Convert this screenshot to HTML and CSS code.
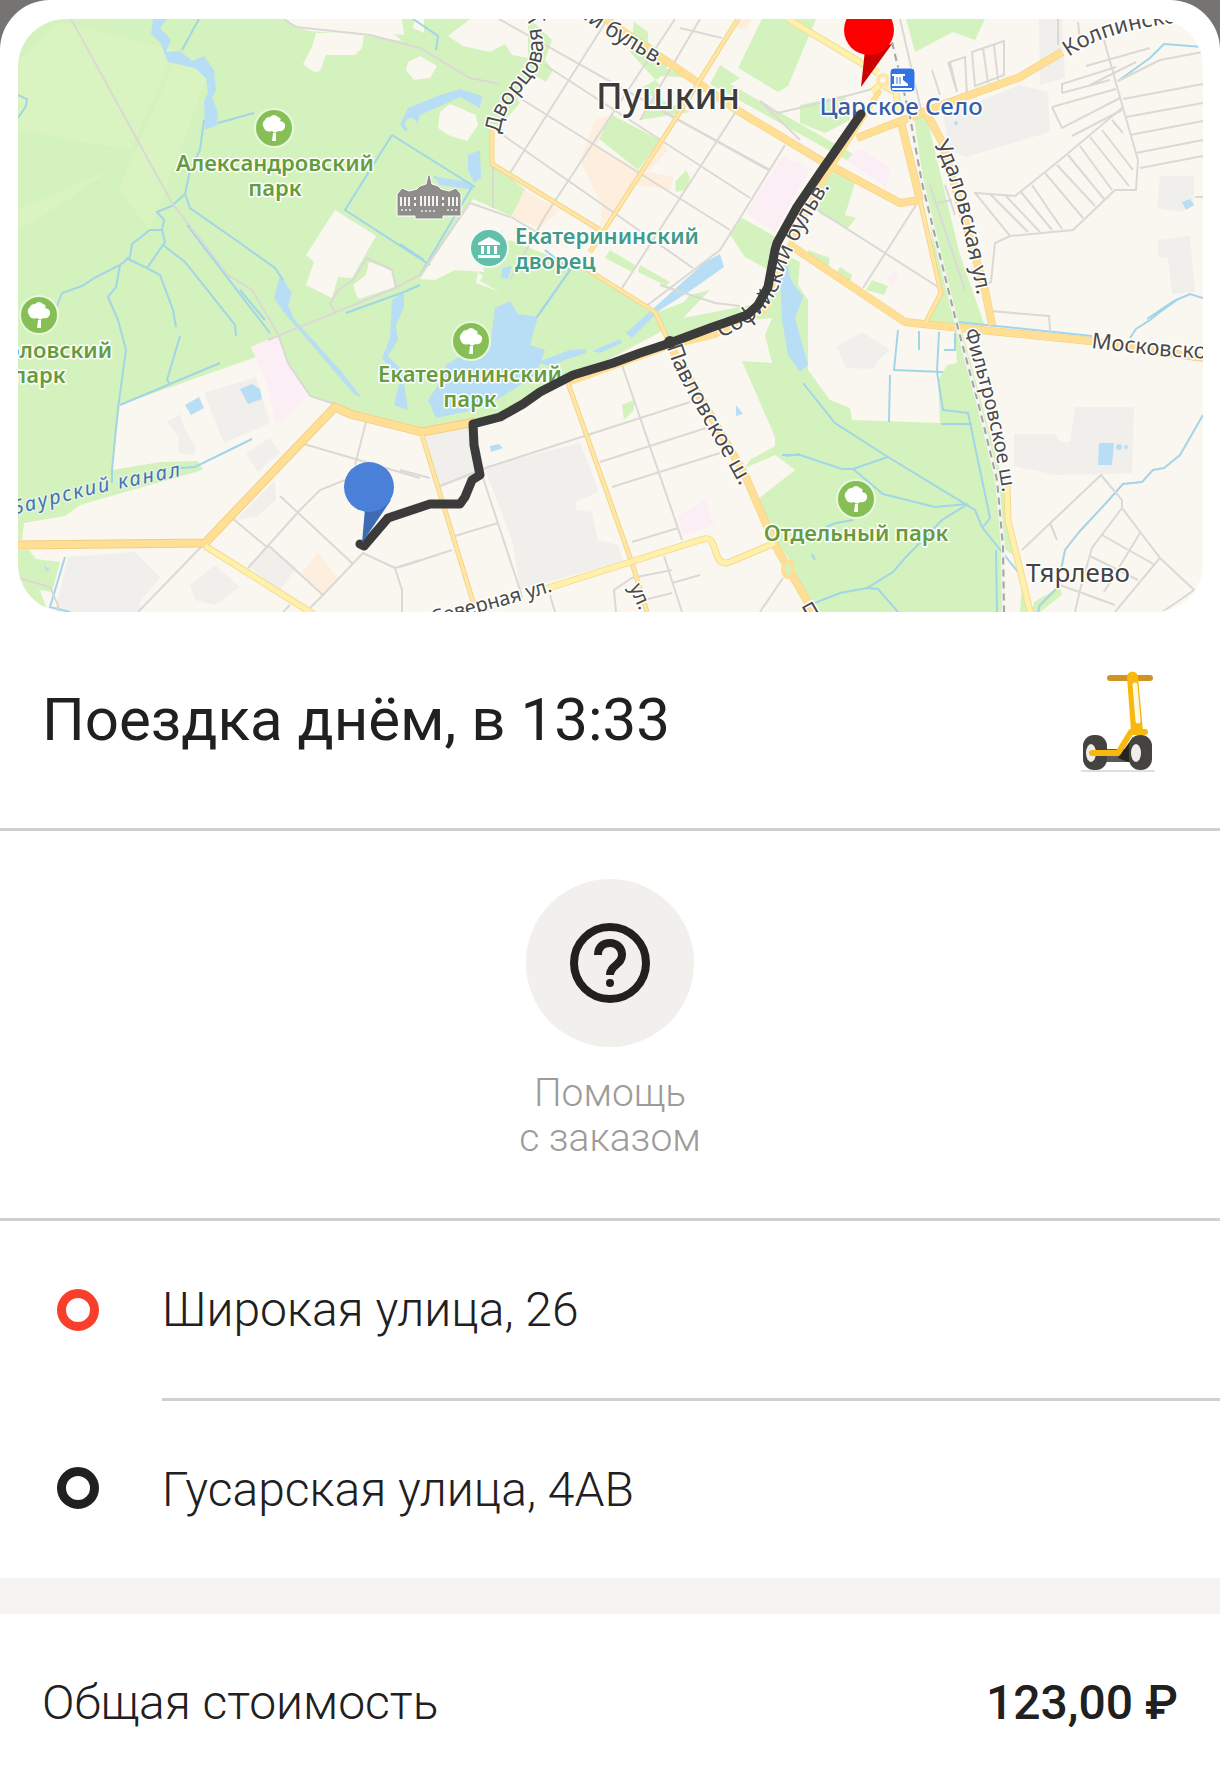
FILE: index.html
```html
<!DOCTYPE html>
<html lang="ru">
<head>
    <meta charset="UTF-8">
    <meta name="viewport" content="width=device-width, initial-scale=1.0">
    <title>Поездка</title>
    <link rel="stylesheet" href="styles.css">
</head>
<body>

<main class="sheet">

    <div class="map">
        <svg viewBox="18 19 1185 593" role="img" aria-label="Маршрут поездки">
            <defs>
                <g id="tree">
                    <circle r="20" fill="#e9f8dc"/>
                    <circle r="18" fill="#86bf56"/>
                    <path d="M-9-8Q-8-11-4-11Q0-15 4-11Q8-10 6-7Q12-6 11-1Q10 4 4 3Q1 6-2 3Q-8 5-10 0Q-13-5-9-8Z" fill="#fff"/>
                    <path d="M-1 5h3v8h-4z" fill="#fff"/>
                </g>
                <path id="p-dvor" d="M500 134C502 108 522 92 536 72C546 55 544 40 537 5"/>
                <path id="p-bulv" d="M576 14L605 34L670 72"/>
                <path id="p-sof" d="M721 338C750 325 771 310 781 281C789 251 810 218 837 175"/>
                <path id="p-pav" d="M667 347C675 377 705 420 745 495"/>
                <path id="p-udal" d="M934 145C955 181 966 240 980 310"/>
                <path id="p-filt" d="M964 331C978 375 993 430 1003 495"/>
                <path id="p-kolp" d="M1069 57C1095 38 1130 27 1200 20"/>
                <path id="p-mosk" d="M1091 348L1160 356L1230 360"/>
                <path id="p-kanal" d="M14 515L90 495L190 474"/>
                <path id="p-sev" d="M433 625C470 614 510 605 560 589"/>
            </defs>

            <rect x="18" y="19" width="1185" height="593" fill="#faf7f0"/>

            <!-- парки -->
            <g fill="#d4f2bd">
                <path d="M18 19H530L552 40L545 60L553 70L546 82L534 75L516 97L520 103L505 120L492 132V164L526 190L511 217L505 218L500 243L480 254L485 262L510 240L590 272L655 313L690 300L683 320L560 385L540 395L500 417L474 425L424 432L350 414L335 404L310 396L288 362L278 335L251 347L256 357L120 405L112 470L160 462L198 461L203 470L150 485L80 505L65 516L24 523L22 540H18Z"/>
                <path d="M18 550H29L36 559L60 562L52 592L40 590L48 612H18Z"/>
                <path d="M598 138L612 115L660 140L638 170Z"/>
                <path d="M634 22L648 32L648 42L672 62L666 68L694 78L662 76L638 90L690 112L640 120L660 85L630 52Z"/>
                <path d="M762 19H816L788 86L778 92L738 68Z"/>
                <path d="M720 65L740 78L730 84L860 158L850 162L710 84Z"/>
                <path d="M906 19H985L975 40L953 32L915 52Z"/>
                <path d="M800 105L845 95L850 120L825 133L800 123Z"/>
                <path d="M675 182L686 170L690 178L686 190L676 192Z"/>
                <path d="M742 218L776 237L772 272L745 257L729 233Z"/>
                <path d="M828 165L856 180L845 215L856 218L848 228L820 214L816 200Z"/>
                <path d="M610 250L635 265L632 272L605 258ZM640 265L670 282L666 286L638 272Z"/>
                <path d="M808 250L830 258L828 268L808 262ZM840 267L852 275L850 282L835 275ZM872 280L888 286L884 295L866 290Z"/>
                <path d="M622 405L634 400L634 410L624 420Z"/>
                <path d="M659 325L670 318L690 295L710 290L683 318L765 302L770 288L785 255L800 262L798 285L808 300L808 370L830 400L850 408L852 420L940 423L938 380L947 365L957 363L955 330L925 325L940 293L914 118H927L960 255L985 326L962 330L1003 482L1010 542L1032 612H812L790 560L775 540L757 500L795 470L775 455L745 468L750 460L775 446V437L742 361L772 363L765 335L772 318L735 322L668 343Z"/>
                <path d="M1034 602L1060 587L1062 595L1040 612H1032Z"/>
            </g>
            <path d="M1003 548L1014 556L1022 585L1020 612H1004Z" fill="#faf7f0"/>
            <g fill="#e0f5c5" opacity="0.5">
                <path d="M60 22L175 50L130 150L18 130V60Z"/>
                <path d="M178 55L210 70L150 230L118 190Z"/>
                <path d="M18 210L110 170L60 205L18 230Z"/>
            </g>

            <!-- просветы в зелени -->
            <g fill="#faf7f0">
                <path d="M284 19H402L404 35L394 34L402 41L360 35L310 31L296 27Z"/>
                <path d="M316 33H364L362 48L355 55L326 55L320 71L314 72L303 64L312 47Z"/>
                <path d="M470 19H528V58L512 55L505 44L490 52L463 46L448 36Z"/>
                <path d="M408 62L420 56L437 66L430 78L414 80L406 70Z"/>
                <path d="M440 112L450 104L476 115L478 125L467 141L448 135L438 128Z"/>
                <path d="M415 19H424V33L413 28Z"/>
                <path d="M335 210L376 236L352 278L338 277L332 298L306 285L314 262L306 255Z"/>
                <path d="M369 262L393 270L395 287L358 299L353 285L366 275Z"/>
                <path d="M473 199L511 216L505 223L498 240L480 252L484 272L455 270L435 280L420 279L470 204Z"/>
                <path d="M478 272L483 276L480 281L500 292L476 283Z"/>
            </g>

            <!-- кварталы -->
            <g fill="#f0efeb">
                <path d="M204 393L256 377L270 423L224 443Z"/>
                <path d="M167 422L180 414L184 428L196 447L194 455L179 453L178 436Z"/>
                <path d="M246 453L270 438L280 452L258 472Z"/>
                <path d="M236 520L275 480L276 500L258 516Z"/>
                <path d="M68 557L135 552L160 577L140 602V612H55Z"/>
                <path d="M190 585L215 565L240 587L215 605L195 600Z"/>
                <path d="M250 568L266 545L297 567L280 590Z"/>
                <path d="M426 436L470 425L478 475L439 486Z"/>
                <path d="M484 467L580 443L594 478L598 492L575 502L576 510L592 512L598 540L618 545L623 561L520 590L512 540Z"/>
                <path d="M943 115L1020 85L1048 92L1050 132L965 157L950 150Z"/>
                <path d="M1039 19H1062L1065 78L1040 85Z"/>
                <path d="M1160 176H1194V205L1180 212L1157 208Z"/>
                <path d="M1158 240L1190 236L1195 292L1172 294L1168 258L1158 257Z"/>
                <path d="M837 347L862 332L890 350L878 360L874 369L846 368Z"/>
                <path d="M1075 407H1134L1132 473L1056 475L1014 466V434H1056L1060 442H1070Z"/>
            </g>
            <g fill="#fceef5">
                <path d="M251 347L278 337L288 363L307 397L290 415L276 424L268 387Z"/>
                <path d="M745 213L783 156L809 168L775 232Z"/>
                <path d="M678 516L705 500L714 525L683 536Z"/>
                <path d="M847 160L858 148L890 167L886 188Z"/>
                <path d="M800 165L808 172L800 190Z"/>
                <path d="M886 277L894 271L900 277L892 287Z"/>
            </g>
            <g fill="#fdeedd">
                <path d="M302 573L318 553L339 580L323 593Z"/>
                <path d="M524 190L560 210L540 228L512 217Z"/>
                <path d="M595 120L610 115L597 145L638 170L674 177L670 190L632 184L610 215L600 228L602 205L580 160Z"/>
                <path d="M660 140L668 150L650 170L640 168Z"/>
                <path d="M738 19H752L746 30L736 28Z"/>
            </g>

            <!-- вода -->
            <g fill="#b7def5">
                <path d="M153 19H167L160 28L171 40L166 52L180 51L192 61L204 56L214 70L216 90L212 98L218 112L217 125L205 130L204 102L208 92L206 78L195 68L168 62L160 42L151 34Z"/>
                <path d="M280 275L292 293L288 305L294 319L340 370L362 398L354 394L286 315L274 298Z"/>
                <path d="M400 125L408 108L440 95L460 89L482 96L480 108L460 97L445 104L420 115L416 128L405 131Z"/>
                <path d="M468 155L480 150L481 178L474 183L468 170Z"/>
                <path d="M432 175L442 178L470 182L474 190L440 185Z"/>
                <path d="M495 308L510 301L518 314L538 317L530 345L545 350L536 375L500 398L465 412L436 418L428 400L438 385L446 365L470 350L490 348Z"/>
                <path d="M392 300L404 292V307L396 325L398 340L388 356L402 370L408 410L394 405L400 380L382 358L390 338Z"/>
                <path d="M538 362L570 350L586 349L586 353L565 360L548 366ZM592 351L620 339L622 343L600 353Z"/>
                <path d="M626 333L705 262L720 254L724 267L690 291L660 310L632 338Z"/>
                <path d="M502 268L512 266L508 279L501 278Z"/>
                <path d="M780 275L786 255L791 280L803 297L795 318L808 365L800 372L788 355L782 320Z"/>
                <path d="M185 405L199 397L204 408L191 415Z"/>
                <path d="M240 389L252 384L260 389L262 399L248 404Z"/>
                <path d="M490 446L499 444L503 448L491 452Z"/>
                <path d="M736 405L743 414L736 416Z"/>
                <path d="M1099 443H1114L1112 465H1098Z"/>
                <path d="M1182 202L1190 199L1194 205L1186 210Z"/>
                <circle cx="956" cy="123" r="2"/><circle cx="1119" cy="447" r="3"/><circle cx="1126" cy="447" r="2"/>
                <path d="M44 565L50 570L46 572Z"/>
            </g>
            <path d="M455 315L480 322L478 345L462 355L455 340Z" fill="#d4f2bd"/>
            <circle cx="411" cy="124" r="6" fill="#d4f2bd"/>
            <g fill="none" stroke="#a3d5e8" stroke-width="2">
                <path d="M199 19L182 50M218 123L254 113M18 95L27 99L26 106L18 118"/>
                <path d="M204 120L200 150L190 170L185 194L172 206L157 212L164 220L162 230H150L132 244L130 257L120 265L96 277L82 286L62 293L57 306M18 360L38 345"/>
                <path d="M185 194L190 208L240 243L275 268L283 280"/>
                <path d="M162 230L165 242L147 268L126 258M147 268L160 275L173 310L176 327M163 245L185 262L235 325L236 336"/>
                <path d="M120 265L116 287L108 297L118 320L126 350L118 408L112 470V483"/>
                <path d="M187 225L270 333M240 290L265 320"/>
                <path d="M180 336L167 380L170 384M120 405L220 363"/>
                <path d="M413 19L438 36L436 50M392 135L345 210L430 265M392 135L475 187M400 244L424 260M420 275L472 187M538 316L570 270"/>
                <path d="M180 468L195 467L252 439M65 557L50 607L70 612"/>
                <path d="M346 313L404 292L420 285M545 250L570 270L536 318"/>
                <path d="M803 383L835 423L888 457L975 510L982 527L1018 572M782 455L800 455L842 469L853 469L888 457M853 469L883 494L935 507L968 504L942 520L905 558L893 572L867 588L840 593L812 604M867 588L878 589L898 612"/>
                <path d="M898 330L894 370L943 372M890 375L889 422M919 331V350M939 332L937 372L943 410L968 413L990 518L983 527M941 424H972M944 350H955V333M996 550L997 612"/>
                <path d="M1177 300L1160 312L1150 320L1136 329L1130 338M1203 298L1190 294L1174 301L1147 319"/>
                <path d="M1203 415L1180 455L1164 468L1153 470L1142 482L1123 484L1107 502L1080 531L1065 550L1061 570M1060 585L1040 605L1038 612"/>
                <path d="M1118 81L1150 58L1164 44L1203 47M958 322L1092 336"/>
                <path d="M786 456L800 454M826 527L836 523L853 520M812 554L815 560"/>
            </g>

            <!-- мелкие улицы -->
            <g fill="none" stroke="#dbd9d5" stroke-width="2">
                <path d="M71 19L172 203L228 275L252 290L278 334M284 19L296 27L370 35L420 48L470 78L500 84"/>
                <path d="M268 340L395 288L420 275L470 203L510 217"/>
                <path d="M335 312L330 304L338 290L353 280L367 258L392 270L396 288"/>
                <path d="M278 334L288 363L310 396L335 404"/>
                <path d="M499 19L768 170M545 65L750 198M515 95L730 230M500 133L693 268M605 23L510 173M675 19L545 216M735 113L622 288M785 145L740 218L720 250L645 307M493 164V208M511 217L550 240M700 19L640 120M680 28L722 38"/>
                <path d="M545 216L510 280M660 110L770 170M660 285L715 303L740 306"/>
                <path d="M760 101L778 113L820 103L880 87M760 101L800 140"/>
                <path d="M813 207L938 287M916 205L863 288M900 19L923 118"/>
                <path d="M948 62L957 92L950 62L965 57L967 95M972 52L1004 41V75L975 86ZM983 48L988 83M994 45L998 80"/>
                <path d="M932 70L940 95M1058 19V45M1078 22L1080 40M1104 40L1123 108L1138 160L1136 190L1115 190L1073 230L1010 236L975 193L1015 196L1060 160L1122 108"/>
                <path d="M1086 66L1150 48M1090 85L1136 62M1062 93L1110 80M1062 93V84L1116 67M1052 107L1116 89M1052 107L1062 128L1120 98M1072 136L1122 110"/>
                <path d="M1118 81L1160 60L1203 52M1123 99L1203 84M1126 117L1203 103M1130 135L1203 121M1136 153L1203 140M1140 168L1203 156"/>
                <path d="M990 194L1028 232M1006 196L1040 232M1021 192L1052 230M1032 185L1062 229M1045 173L1083 218M1057 165L1095 206M1068 155L1104 199M1080 146L1112 190M1090 137L1129 186M1102 130L1133 170M1112 120L1123 133"/>
                <path d="M1010 236L995 243L991 282L985 285M990 311L1049 316L1050 330"/>
                <path d="M930 185L965 290M945 185L955 215M938 203L952 200"/>
                <path d="M304 444L420 478M366 422L355 465M280 496L352 563M232 518L268 548M268 545L323 595L363 553L395 568L402 590V612M323 595L310 608M248 568L300 510L320 490L345 480M202 546L138 612M395 568L420 560M290 605L283 612"/>
                <path d="M400 470L430 478M438 487L485 468L690 402M600 462L706 428M612 487L720 453M622 365L682 540M482 475L520 590L522 598M455 536L498 523M400 567L452 550M632 542L678 528M550 595L555 612M616 612L614 590L632 578L672 570M664 556L682 612M672 583L700 575M640 601L672 593M783 578L760 612"/>
                <path d="M1022 550L1101 475L1122 500L1122 508L1092 548L1080 590M1050 523L1057 540M1122 508L1160 558L1115 612M1160 558L1194 590L1180 600L1162 612M1102 535L1155 565M1140 533L1104 592M1090 556L1138 580M1060 585L1115 605M1080 590L1075 612"/>
                <path d="M18 578L50 587L58 605V612M1195 197H1203"/>
            </g>

            <!-- дороги -->
            <g fill="none" stroke-linejoin="round">
                <g stroke="#f5cd7c">
                    <path d="M18 545L205 543L335 407L350 414L422 432L475 422" stroke-width="9"/>
                    <path d="M605 19L665 60L740 112L820 160L900 203L920 200" stroke-width="8"/>
                    <path d="M1062 52L1020 77L950 102L857 138M900 118L920 200M925 110L942 142L985 290L992 325" stroke-width="8"/>
                    <path d="M790 245L905 322L960 328L1090 341L1203 358" stroke-width="8"/>
                    <path d="M667 340L745 475L775 545L815 615" stroke-width="8"/>
                </g>
                <g stroke="#ffdf96">
                    <path d="M18 545L205 543L335 407L350 414L422 432L475 422" stroke-width="7"/>
                    <path d="M605 19L665 60L740 112L820 160L900 203L920 200" stroke-width="7"/>
                    <path d="M1062 52L1020 77L950 102L857 138M900 118L920 200M925 110L942 142L985 290L992 325" stroke-width="7"/>
                    <path d="M790 245L905 322L960 328L1090 341L1203 358" stroke-width="7"/>
                    <path d="M667 340L745 475L775 545L815 615" stroke-width="7"/>
                    <path d="M880 90L855 130L820 185L790 245L765 310L715 335L670 346L568 383" stroke-width="6"/>
                </g>
                <g stroke="#f5d585" stroke-width="5">
                    <path d="M492 130V164L600 230M738 19L700 80L675 120L590 252M585 268L655 312L668 340"/>
                    <path d="M920 200L941 293L926 322M568 383L632 563L647 612M422 435L474 605"/>
                </g>
                <g stroke="#ffe6a8" stroke-width="3">
                    <path d="M492 130V164L600 230M738 19L700 80L675 120L590 252M585 268L655 312L668 340"/>
                    <path d="M920 200L941 293L926 322M568 383L632 563L647 612M422 435L474 605"/>
                </g>
                <g stroke="#f3dc90" stroke-width="7">
                    <path d="M205 546L315 615M545 589L700 540Q710 536 713 544L718 558Q722 565 730 562L775 543M788 19L878 73"/>
                    <path d="M1007 485L1008 520L1031 615"/>
                    <path d="M872 92L880 85M884 86L896 92L898 110"/>
                </g>
                <g stroke="#fff0ac" stroke-width="5">
                    <path d="M205 546L315 615M545 589L700 540Q710 536 713 544L718 558Q722 565 730 562L775 543M788 19L878 73"/>
                    <path d="M1007 485L1008 520L1031 615"/>
                    <path d="M872 92L880 85M884 86L896 92L898 110"/>
                </g>
                <ellipse cx="788" cy="569" rx="5" ry="8" fill="#d4f2bd" stroke="#ffdf96" stroke-width="4"/>
                <circle cx="883" cy="80" r="5" fill="#faf7f0" stroke="#ffe6a8" stroke-width="4"/>
                <path d="M886 19L892 42L910 117L922 183L955 317L980 410L997 480L1003 547L1004 612" stroke="#f4f4f2" stroke-width="4"/>
                <path d="M886 19L892 42L910 117L922 183L955 317L980 410L997 480L1003 547L1004 612" stroke="#a3a3a0" stroke-width="2" stroke-dasharray="7 5"/>
            </g>

            <!-- названия улиц -->
            <g class="street">
                <text><textPath href="#p-dvor">Дворцовая ул.</textPath></text>
                <text><textPath href="#p-bulv">ий бульв.</textPath></text>
                <text><textPath href="#p-sof">Софийский бульв.</textPath></text>
                <text><textPath href="#p-pav">Павловское ш.</textPath></text>
                <text><textPath href="#p-udal">Удаловская ул.</textPath></text>
                <text class="small"><textPath href="#p-filt">Фильтровское ш.</textPath></text>
                <text><textPath href="#p-kolp">Колпинское</textPath></text>
                <text><textPath href="#p-mosk">Московское</textPath></text>
                <text class="small"><textPath href="#p-sev">Северная ул.</textPath></text>
                <text class="small" transform="translate(629 587) rotate(66)">ул.</text>
                <text transform="translate(808 622) rotate(-30)">П</text>
                <text class="canal"><textPath href="#p-kanal">Баурский канал</textPath></text>
            </g>

            <!-- подписи мест -->
            <g class="park">
                <text x="275" y="171">Александровский</text>
                <text x="275" y="196">парк</text>
                <text x="470" y="382">Екатерининский</text>
                <text x="470" y="407">парк</text>
                <text x="856" y="541">Отдельный парк</text>
                <text x="39" y="358">Баболовский</text>
                <text x="39" y="383">парк</text>
            </g>
            <g class="palace">
                <text x="515" y="244">Екатерининский</text>
                <text x="515" y="269">дворец</text>
            </g>
            <text class="station" x="901" y="115">Царское Село</text>
            <text class="city" x="668" y="109">Пушкин</text>
            <text class="village" x="1078" y="582">Тярлево</text>

            <!-- маршрут -->
            <path d="M360 544L364 546L388 518L430 504H460L465 497L472 480L480 475L474 445L473 424L500 417L523 404L540 392L573 375L613 363L640 353L670 343L710 328L747 315L758 305L768 287L775 250L777 243L797 207L820 173L861 114" fill="none" stroke="#3b3b3b" stroke-width="9" stroke-linecap="round" stroke-linejoin="round"/>
            <circle cx="670" cy="342" r="6" fill="#3b3b3b"/>

            <use href="#tree" x="274" y="128"/>
            <use href="#tree" x="39" y="315"/>
            <use href="#tree" x="471" y="341"/>
            <use href="#tree" x="856" y="499"/>

            <g transform="translate(489 248)">
                <circle r="20" fill="#f2faf5"/>
                <circle r="18" fill="#62bfaa"/>
                <path d="M-11-5L0-11L11-5V-3H-11ZM-8-2H-5V6H-8ZM-2-2H1V6H-2ZM5-2H8V6H5ZM-11 7H11V10H-11Z" fill="#fff"/>
            </g>

            <!-- дворец -->
            <g transform="translate(429 197)">
                <path d="M-32-3L-27-9L-20-6L-12-8L-9-11L-3-13L-1-22H1L3-13L9-11L12-8L20-6L27-9L32-3V19H14V22H-14V19H-32Z" fill="#8f8d8b" stroke="#fff"/>
                <path d="M-28 0V9M-24 0V9M-20 0V9M-14 0V3M-14 6V9M-8-1V9M-4-1V9M0-1V9M4-1V9M8-1V9M14 0V3M14 6V9M20 0V9M24 0V9M28 0V9" stroke="#f4f2ef" stroke-width="2"/>
                <path d="M-28 13H-18M18 13H28M-8 14H8" stroke="#d8d6d3" stroke-width="2" stroke-dasharray="2 2"/>
            </g>

            <!-- вокзал -->
            <g transform="translate(902 80)">
                <rect x="-12" y="-12" width="25" height="24" rx="4" fill="#3273e3" stroke="#fff"/>
                <path d="M-10-6H3V-4H1V0L6 4V6H-10V4H-8V-4H-10ZM-10 8H10V10H-10Z" fill="#fff"/>
                <path d="M-5-3V4M-2-3V4" stroke="#3273e3"/>
            </g>

            <!-- метки начала и конца -->
            <path d="M365 508L362 543L391 500Z" fill="#3e6cb4"/>
            <circle cx="369" cy="487" r="25" fill="#4a80d8"/>
            <path d="M865 50L861 87L892 44Z" fill="#cc0000"/>
            <circle cx="869" cy="30" r="25" fill="#ff0000"/>
        </svg>
    </div>

    <header class="trip">
        <h1>Поездка днём, в 13:33</h1>
        <svg class="scooter" viewBox="0 0 76 104" aria-hidden="true">
            <path d="M2 103H74" stroke="#dededc" stroke-width="2" stroke-linecap="round"/>
            <path d="M16 81H50V94H16Z" fill="#5a5955"/>
            <path d="M53 69L38 90L48 94L60 94Z" fill="#26241f"/>
            <rect x="3" y="67" width="24" height="35" rx="11" fill="#44433f"/>
            <rect x="49" y="67" width="23" height="35" rx="11" fill="#44433f"/>
            <ellipse cx="11" cy="85" rx="5" ry="9" fill="#efeeeb"/>
            <ellipse cx="56" cy="85" rx="5" ry="9" fill="#efeeeb"/>
            <path d="M30 10H70" stroke="#cf9426" stroke-width="6" stroke-linecap="round"/>
            <path d="M12 85H38L51 64H65" fill="none" stroke="#f7b90f" stroke-width="6" stroke-linecap="round" stroke-linejoin="round"/>
            <path d="M47 9C47 2 58 2 58 9L63 63H51Z" fill="#f7b90f"/>
            <path d="M55 17L58 53" stroke="#fff8e0" stroke-width="5" stroke-linecap="round"/>
        </svg>
    </header>

    <section class="help">
        <button type="button" class="help-button">
            <span class="help-icon">
                <svg viewBox="0 0 80 80" aria-hidden="true">
                    <circle cx="40" cy="40" r="36" fill="none" stroke="#21201f" stroke-width="8"/>
                    <path d="M28 32C28 24 33 20 40 20S52 25 52 32C52 42 40 42 40 52" fill="none" stroke="#21201f" stroke-width="8"/>
                    <circle cx="40" cy="60" r="4" fill="#21201f"/>
                </svg>
            </span>
            <span class="help-text">Помощь<br>с заказом</span>
        </button>
    </section>

    <ul class="points">
        <li><span class="dot dot-start"></span><span class="address">Широкая улица, 26</span></li>
        <li><span class="dot"></span><span class="address">Гусарская улица, 4АВ</span></li>
    </ul>

    <footer class="total">
        <span>Общая стоимость</span>
        <strong>123,00 ₽</strong>
    </footer>

</main>

</body>
</html>
```
FILE: styles.css
```css
* {
    box-sizing: border-box;
}
body {
    font-family: Roboto, sans-serif;
    background-color: #757472;
    color: #21201f;
    margin: 0;
}
.sheet {
    background-color: white;
    border-radius: 50px 50px 0 0;
    min-height: 100vh;
    padding-top: 19px;
}

/* Карта */
.map {
    margin: 0 17px 0 18px;
    border-radius: 48px;
    overflow: hidden;
}
.map svg {
    display: block;
    width: 100%;
}
.map text {
    font-family: "Noto Sans", sans-serif;
    paint-order: stroke;
    stroke: white;
    stroke-width: 3px;
    stroke-linejoin: round;
}
.street text {
    font-size: 22px;
    fill: #4a4a4a;
}
.street .small {
    font-size: 20px;
}
.street .canal {
    font-size: 20px;
    font-style: italic;
    letter-spacing: 2px;
    fill: #4272b8;
    stroke: #e6f5dc;
}
.park text {
    font-size: 22px;
    font-weight: 600;
    text-anchor: middle;
    fill: #669c40;
}
.palace text {
    font-size: 22px;
    font-weight: 600;
    fill: #429a89;
}
.map .station {
    font-size: 24px;
    font-weight: 500;
    text-anchor: middle;
    fill: #3560a8;
}
.map .city {
    font-size: 36px;
    font-weight: 500;
    text-anchor: middle;
    fill: #3b3b3b;
}
.map .village {
    font-size: 26px;
    text-anchor: middle;
    fill: #444;
}

/* Заголовок */
.trip {
    display: flex;
    justify-content: space-between;
    align-items: center;
    height: 219px;
    padding: 0 64px 0 42px;
    border-bottom: 3px solid #d0d0cc;
}
.trip h1 {
    font-size: 60px;
    font-weight: 400;
    line-height: 70px;
    margin: 0;
}
.scooter {
    width: 76px;
    height: 104px;
}

/* Помощь */
.help {
    display: flex;
    justify-content: center;
    padding: 48px 0 57px;
    border-bottom: 3px solid #d0d0cc;
}
.help-button {
    display: flex;
    flex-direction: column;
    align-items: center;
    gap: 24px;
    padding: 0;
    border: none;
    background: none;
    color: #9e9b98;
    font-family: inherit;
    font-size: 39px;
    font-weight: 300;
    line-height: 45px;
    cursor: pointer;
}
.help-icon {
    display: flex;
    align-items: center;
    justify-content: center;
    width: 168px;
    height: 168px;
    border-radius: 50%;
    background-color: #f1f0ed;
}
.help-icon svg {
    width: 80px;
    height: 80px;
}

/* Адреса */
.points {
    list-style: none;
    margin: 0;
    padding: 0;
    border-bottom: 36px solid #f4f3f1;
}
.points li {
    display: flex;
    align-items: center;
    padding-left: 57px;
    font-size: 48px;
    font-weight: 300;
    line-height: 57px;
}
.dot {
    width: 42px;
    height: 42px;
    margin-right: 63px;
    border: 9px solid #21201f;
    border-radius: 50%;
}
.dot-start {
    border-color: #fa3e2c;
}
.address {
    flex: 1;
    padding: 60px 0;
}
.points li + li .address {
    border-top: 3px solid #d0d0cc;
}

/* Стоимость */
.total {
    display: flex;
    justify-content: space-between;
    align-items: center;
    padding: 60px 42px 50px;
    font-size: 48px;
    font-weight: 300;
    line-height: 57px;
}
.total strong {
    font-weight: 500;
}
```
